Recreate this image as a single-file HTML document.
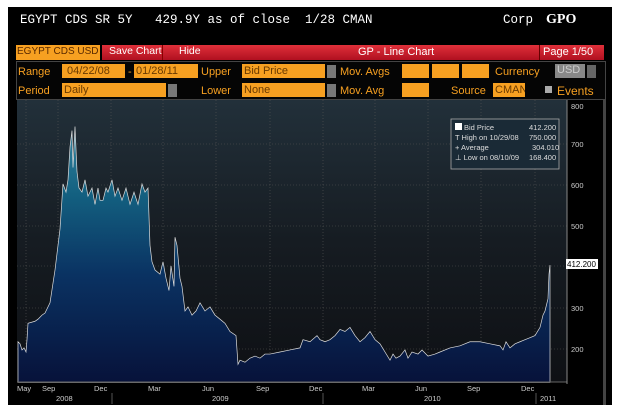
<!DOCTYPE html>
<html><head><style>
*{margin:0;padding:0;box-sizing:border-box}
body{width:624px;height:414px;background:#fff;position:relative;overflow:hidden;font-family:"Liberation Sans",sans-serif}
.panel{position:absolute;left:8px;top:7px;width:604px;height:398px;background:#000}
.t{position:absolute;color:#fff;white-space:nowrap}
.mono{font-family:"Liberation Mono",monospace}
.box{position:absolute;background:#f7a021;color:#6a3a00;font-size:11px;line-height:14px;padding-left:2px;white-space:nowrap;overflow:hidden}
.lbl{position:absolute;color:#f7a021;font-size:11px;line-height:14px;white-space:nowrap}
.dd{position:absolute;width:9px;height:13px;background:#777}
</style></head><body>
<div class="panel"></div>
<div class="t mono" style="left:20px;top:13px;font-size:12.5px">EGYPT CDS SR 5Y &nbsp;&nbsp;429.9Y as of close &nbsp;1/28 CMAN</div>
<div class="t mono" style="left:503px;top:13px;font-size:12.5px">Corp</div>
<div class="t" style="left:546px;top:12px;font-size:14px;font-weight:bold;font-family:'Liberation Serif',serif">GPO</div>
<div class="box" style="left:16px;top:45px;width:84px;height:15px;color:#5a2a00;font-size:10px;padding-left:1px">EGYPT CDS USD S</div>
<div style="position:absolute;left:102px;top:45px;width:502px;height:15px;background:linear-gradient(#e0303a,#b01020)"></div>
<div style="position:absolute;left:162px;top:45px;width:1px;height:15px;background:#800"></div>
<div class="t" style="left:109px;top:45px;font-size:10.5px">Save Chart</div>
<div class="t" style="left:179px;top:45px;font-size:10.5px">Hide</div>
<div class="t" style="left:358px;top:46px;font-size:11px">GP - Line Chart</div>
<div style="position:absolute;left:539px;top:45px;width:1px;height:15px;background:#600"></div>
<div class="t" style="left:543px;top:46px;font-size:11px">Page 1/50</div>
<div style="position:absolute;left:16px;top:61px;width:590px;height:39px;border:1px solid #444;background:#050505"></div>
<div class="lbl" style="left:18px;top:65px">Range</div>
<div class="box" style="left:62px;top:64px;width:63px;height:14px">&nbsp;04/22/08</div>
<div class="lbl" style="left:128px;top:65px">-</div>
<div class="box" style="left:134px;top:64px;width:64px;height:14px">01/28/11</div>
<div class="lbl" style="left:201px;top:65px">Upper</div>
<div class="box" style="left:242px;top:64px;width:83px;height:14px">Bid Price</div>
<div class="dd" style="left:327px;top:65px"></div>
<div class="lbl" style="left:340px;top:65px">Mov. Avgs</div>
<div class="box" style="left:402px;top:64px;width:27px;height:14px"></div>
<div class="box" style="left:432px;top:64px;width:27px;height:14px"></div>
<div class="box" style="left:462px;top:64px;width:27px;height:14px"></div>
<div class="lbl" style="left:495px;top:65px">Currency</div>
<div style="position:absolute;left:555px;top:64px;width:30px;height:14px;background:#888;color:#ccc;font-size:11px;padding-left:2px">USD</div>
<div class="dd" style="left:587px;top:65px;background:#666"></div>
<div class="lbl" style="left:18px;top:84px">Period</div>
<div class="box" style="left:62px;top:83px;width:104px;height:14px">Daily</div>
<div class="dd" style="left:168px;top:84px"></div>
<div class="lbl" style="left:201px;top:84px">Lower</div>
<div class="box" style="left:242px;top:83px;width:83px;height:14px">None</div>
<div class="dd" style="left:327px;top:84px"></div>
<div class="lbl" style="left:340px;top:84px">Mov. Avg</div>
<div class="box" style="left:402px;top:83px;width:27px;height:14px"></div>
<div class="lbl" style="left:451px;top:84px">Source</div>
<div class="box" style="left:493px;top:83px;width:32px;height:14px">CMAN</div>
<div style="position:absolute;left:545px;top:86px;width:7px;height:7px;background:#aaa"></div>
<div class="lbl" style="left:557px;top:84px;font-size:12px">Events</div>
<svg style="position:absolute;left:0;top:0" width="624" height="414">
<defs>
<linearGradient id="bg" x1="0" y1="0" x2="0" y2="1"><stop offset="0" stop-color="#22303a"/><stop offset="0.5" stop-color="#161c22"/><stop offset="1" stop-color="#0e1014"/></linearGradient>
<linearGradient id="fl" gradientUnits="userSpaceOnUse" x1="0" y1="780" x2="0" y2="126"><stop offset="0" stop-color="#3a8aa4"/><stop offset="0.3" stop-color="#136080"/><stop offset="0.6" stop-color="#0a3262"/><stop offset="1" stop-color="#07123a"/></linearGradient>
</defs>
<rect x="17" y="100" width="550" height="282" fill="url(#bg)"/>
<g stroke="#555" stroke-width="0.6" stroke-dasharray="1,2">
<line x1="17" y1="144" x2="567" y2="144"/><line x1="17" y1="185" x2="567" y2="185"/><line x1="17" y1="226" x2="567" y2="226"/><line x1="17" y1="266" x2="567" y2="266"/><line x1="17" y1="308" x2="567" y2="308"/><line x1="17" y1="349" x2="567" y2="349"/>
<line x1="26" y1="100" x2="26" y2="382"/><line x1="58" y1="100" x2="58" y2="382"/><line x1="111" y1="100" x2="111" y2="382"/><line x1="163" y1="100" x2="163" y2="382"/><line x1="216" y1="100" x2="216" y2="382"/><line x1="270" y1="100" x2="270" y2="382"/><line x1="323" y1="100" x2="323" y2="382"/><line x1="375" y1="100" x2="375" y2="382"/><line x1="428" y1="100" x2="428" y2="382"/><line x1="481" y1="100" x2="481" y2="382"/><line x1="535" y1="100" x2="535" y2="382"/>
</g>
<g transform="translate(0,434) scale(1,-0.41)">
<path fill="url(#fl)" stroke="#ddd" stroke-width="0.7" vector-effect="non-scaling-stroke" d="M18,126 L18,225 20,220 22,205 24,210 26,200 27,230 28,270 35,275 38,280 42,290 45,295 50,320 55,400 60,500 63,610 66,590 68,620 70,700 72,740 73,650 75,750 77,640 79,600 82,590 85,620 88,580 92,600 95,560 98,600 100,570 103,570 106,600 108,590 112,620 115,580 118,600 122,570 126,600 130,560 134,590 138,560 142,610 145,590 148,600 150,460 152,420 155,400 160,390 163,420 166,380 169,350 171,410 174,360 175,480 177,460 180,380 182,360 185,300 188,310 192,290 196,300 200,320 205,300 210,310 215,290 220,280 225,270 230,250 236,240 238,170 240,180 245,175 250,185 255,190 260,185 265,195 270,195 280,200 290,205 300,210 303,230 310,225 317,240 320,230 325,225 330,230 335,240 340,255 345,250 350,260 355,240 360,225 365,235 370,250 375,230 380,220 385,200 390,180 393,195 396,185 400,190 405,205 408,185 412,200 418,195 422,205 428,190 435,195 440,200 450,210 460,215 470,225 480,225 490,220 500,215 503,205 506,225 510,210 515,220 520,225 525,230 530,235 535,240 540,260 543,290 545,300 548,330 549,390 550,412 L550,126 Z"/>
</g>
<line x1="17" y1="382" x2="567" y2="382" stroke="#666"/>
<rect x="567" y="100" width="36" height="284" fill="#000"/>
<line x1="567" y1="100" x2="567" y2="384" stroke="#888"/>
<rect x="603" y="100" width="3" height="305" fill="#444"/>
<g fill="#ccc" font-family="Liberation Sans" font-size="7.5">
<text x="571" y="109">800</text><text x="571" y="147">700</text><text x="571" y="188">600</text><text x="571" y="229">500</text><text x="571" y="269">400</text><text x="571" y="311">300</text><text x="571" y="352">200</text>
</g>
<rect x="566" y="259" width="32" height="10" fill="#fff"/>
<text x="567" y="267" font-size="8" fill="#000" font-family="Liberation Sans">412.200</text>
<rect x="451" y="119" width="108" height="50" fill="#1a2a36" stroke="#aaa" stroke-width="0.8"/>
<rect x="455" y="123" width="7" height="7" fill="#fff"/>
<g fill="#ddd" font-family="Liberation Sans" font-size="7.5">
<text x="464" y="130">Bid Price</text><text x="529" y="130">412.200</text>
<text x="455" y="140">T High on 10/29/08</text><text x="529" y="140">750.000</text>
<text x="455" y="150">+ Average</text><text x="532" y="150">304.010</text>
<text x="455" y="160">⊥ Low on 08/10/09</text><text x="529" y="160">168.400</text>
</g>
<g fill="#ccc" font-family="Liberation Sans" font-size="7.5">
<text x="17" y="391">May</text><text x="42" y="391">Sep</text><text x="94" y="391">Dec</text><text x="148" y="391">Mar</text><text x="202" y="391">Jun</text><text x="256" y="391">Sep</text><text x="309" y="391">Dec</text><text x="362" y="391">Mar</text><text x="415" y="391">Jun</text><text x="467" y="391">Sep</text><text x="521" y="391">Dec</text>
<text x="56" y="401">2008</text><text x="212" y="401">2009</text><text x="424" y="401">2010</text><text x="540" y="401">2011</text>
</g>
<g stroke="#555"><line x1="112" y1="393" x2="112" y2="404"/><line x1="323" y1="393" x2="323" y2="404"/><line x1="536" y1="393" x2="536" y2="404"/></g>
</svg>
</body></html>
